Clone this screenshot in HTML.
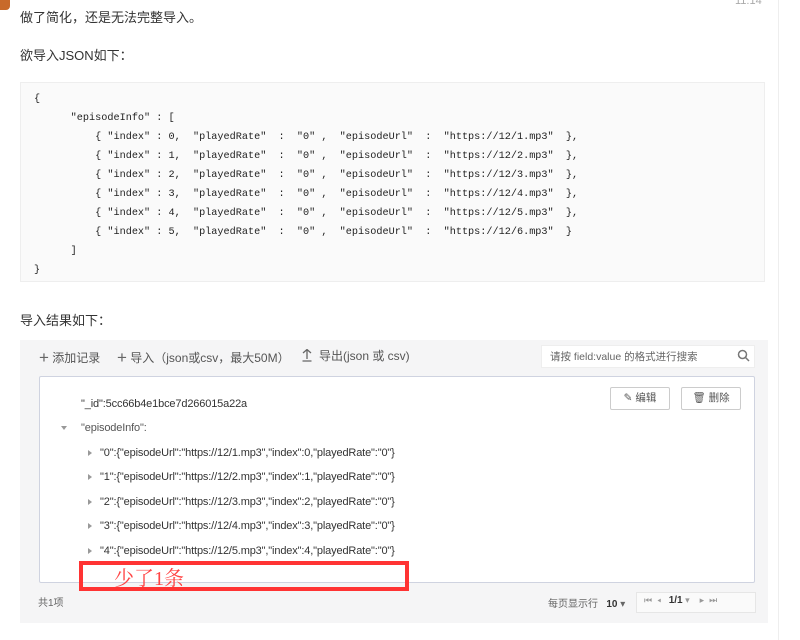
<!DOCTYPE html>
<html><head><meta charset="utf-8"><style>
body{margin:0;width:800px;height:640px;background:#fff;position:relative;overflow:hidden;font-family:"Liberation Sans","Noto Sans CJK SC",sans-serif;color:#333}
.a{position:absolute;white-space:pre}
.code{font-family:"Liberation Mono","Noto Serif CJK SC",monospace;font-size:10.2px;color:#222}
.t{font-size:11px;color:#333;letter-spacing:-0.15px}
.g{font-size:11px;color:#555}
.tri{position:absolute;width:0;height:0;border-top:3px solid transparent;border-bottom:3px solid transparent;border-left:4px solid #999}
</style></head><body>
<div class="a" style="left:0;top:0;width:10px;height:10px;background:#c86a2a;border-radius:0 0 4px 0"></div>
<div class="a" style="left:735px;top:-5px;font-size:11px;color:#aaa">11:14</div>
<div class="a" style="left:778px;top:0;width:1px;height:640px;background:#eee"></div>
<div class="a" style="left:20px;top:7px;font-size:13px">做了简化，还是无法完整导入。</div>
<div class="a" style="left:20px;top:45px;font-size:13px">欲导入JSON如下：</div>
<div class="a" style="left:20px;top:82px;width:743px;height:198px;background:#fafafa;border:1px solid #eee"></div>
<div class="a code" style="left:34px;top:90px;line-height:19px">{
      "episodeInfo" : [
          { "index" : 0,  "playedRate"  :  "0" ,  "episodeUrl"  :  "https://12/1.mp3"  },
          { "index" : 1,  "playedRate"  :  "0" ,  "episodeUrl"  :  "https://12/2.mp3"  },
          { "index" : 2,  "playedRate"  :  "0" ,  "episodeUrl"  :  "https://12/3.mp3"  },
          { "index" : 3,  "playedRate"  :  "0" ,  "episodeUrl"  :  "https://12/4.mp3"  },
          { "index" : 4,  "playedRate"  :  "0" ,  "episodeUrl"  :  "https://12/5.mp3"  },
          { "index" : 5,  "playedRate"  :  "0" ,  "episodeUrl"  :  "https://12/6.mp3"  }
      ]
}</div>
<div class="a" style="left:20px;top:310px;font-size:13px">导入结果如下：</div>
<div class="a" style="left:20px;top:340px;width:748px;height:283px;background:#f5f5f6"></div>
<div class="a g" style="left:39px;top:347px;font-size:12px;color:#555"><span style="font-size:17px;color:#666;position:relative;top:1px">+</span> 添加记录     <span style="font-size:17px;color:#666;position:relative;top:1px">+</span> 导入（json或csv，最大50M）</div>
<div class="a g" style="left:319px;top:347px;font-size:12px;color:#555">导出(json 或 csv)</div>
<svg class="a" style="left:302px;top:349px" width="10" height="13"><path d="M1 4L5 0.5L9 4M5 1V10M0.5 12H9.5" fill="none" stroke="#666" stroke-width="1.3"/></svg>
<div class="a" style="left:541px;top:345px;width:212px;height:21px;background:#fff;border:1px solid #eee"></div>
<div class="a" style="left:550px;top:349px;font-size:10.5px;color:#666">请按 field:value 的格式进行搜索</div>
<svg class="a" style="left:737px;top:349px" width="13" height="13"><circle cx="5.5" cy="5.5" r="4" fill="none" stroke="#777" stroke-width="1.5"/><path d="M8.5 8.5L12 12" stroke="#777" stroke-width="1.5"/></svg>
<div class="a" style="left:39px;top:376px;width:714px;height:205px;background:#fff;border:1px solid #cfd3e0;border-radius:2px"></div>
<div class="a" style="left:610px;top:387px;width:58px;height:21px;border:1px solid #ccc;background:#fff;border-radius:2px;font-size:10.5px;color:#555;text-align:center;line-height:21px">✎ 编辑</div>
<div class="a" style="left:681px;top:387px;width:58px;height:21px;border:1px solid #ccc;background:#fff;border-radius:2px;font-size:10.5px;color:#555;text-align:center;line-height:21px">🗑 删除</div>
<div class="a t" style="left:81px;top:398px">"_id":5cc66b4e1bce7d266015a22a</div>
<div class="a" style="left:61px;top:426px;width:0;height:0;border-left:3px solid transparent;border-right:3px solid transparent;border-top:4px solid #999"></div>
<div class="a t" style="left:81px;top:422px;color:#555">"episodeInfo":</div>
<div class="tri" style="left:88px;top:450px"></div><div class="a t" style="left:100px;top:447px">"0":{"episodeUrl":"https://12/1.mp3","index":0,"playedRate":"0"}</div>
<div class="tri" style="left:88px;top:474px"></div><div class="a t" style="left:100px;top:471px">"1":{"episodeUrl":"https://12/2.mp3","index":1,"playedRate":"0"}</div>
<div class="tri" style="left:88px;top:499px"></div><div class="a t" style="left:100px;top:496px">"2":{"episodeUrl":"https://12/3.mp3","index":2,"playedRate":"0"}</div>
<div class="tri" style="left:88px;top:523px"></div><div class="a t" style="left:100px;top:520px">"3":{"episodeUrl":"https://12/4.mp3","index":3,"playedRate":"0"}</div>
<div class="tri" style="left:88px;top:548px"></div><div class="a t" style="left:100px;top:545px">"4":{"episodeUrl":"https://12/5.mp3","index":4,"playedRate":"0"}</div>
<div class="a" style="left:79px;top:561px;width:322px;height:22px;border:4px solid #f33"></div>
<div class="a" style="left:114px;top:562px;font-size:20px;color:#f44;font-family:'Liberation Serif','Noto Serif CJK SC',serif">少了1条</div>
<div class="a" style="left:38px;top:594px;font-size:10px;color:#666">共1项</div>
<div class="a" style="left:548px;top:595px;font-size:10px;color:#666">每页显示行 &nbsp; <b style="color:#333">10</b> ▾</div>
<div class="a" style="left:636px;top:592px;width:118px;height:19px;background:#fafafa;border:1px solid #e6e6e6"></div>
<div class="a" style="left:644px;top:595px;font-size:9px;color:#999">⏮  ◂   <b style="color:#333;font-size:10px">1/1</b> ▾    ▸  ⏭</div>
</body></html>
